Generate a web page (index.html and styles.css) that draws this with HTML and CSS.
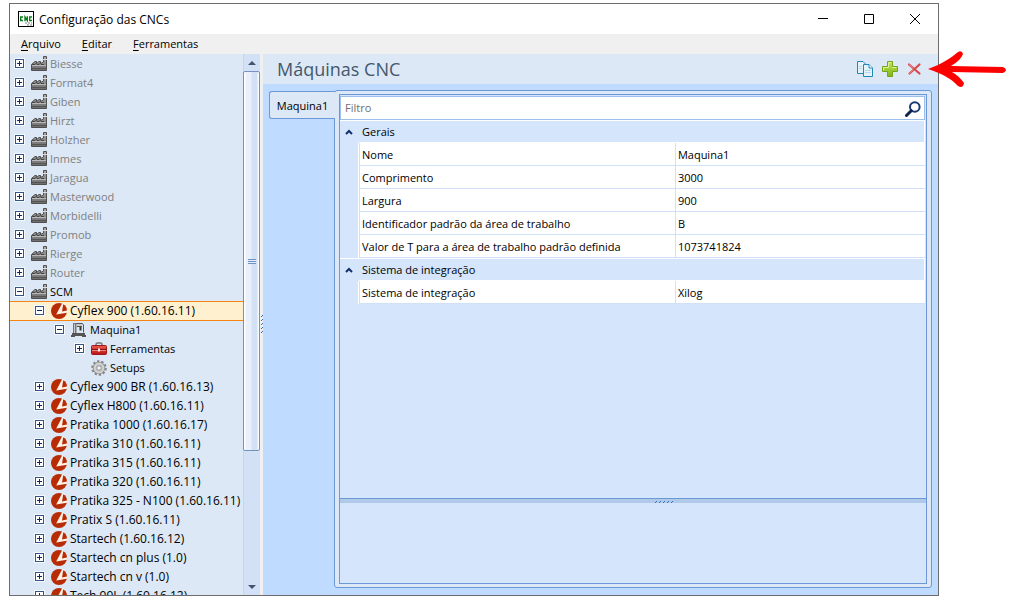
FILE: index.html
```html
<!DOCTYPE html>
<html lang="pt-BR">
<head>
<meta charset="utf-8">
<title>Configuração das CNCs</title>
<link rel="stylesheet" href="styles.css">
</head>
<body>
<svg class="defs" aria-hidden="true">
  <defs>
    <linearGradient id="steel" x1="0" y1="0" x2="0" y2="1"><stop offset="0" stop-color="#b0b0b0"/><stop offset="1" stop-color="#6a6a6a"/></linearGradient>
    <linearGradient id="red" x1="0" y1="0" x2="0" y2="1"><stop offset="0" stop-color="#ec5a50"/><stop offset="1" stop-color="#b81414"/></linearGradient>
    <linearGradient id="green" x1="0" y1="0" x2="0" y2="1"><stop offset="0" stop-color="#c3e64f"/><stop offset="1" stop-color="#7fb51a"/></linearGradient>
    <symbol id="factory" viewBox="0 0 16 16">
      <path d="M.5 14.500V8.500L4 5.500H5.500V7.500L8 5.500H9.500V7.500L12.500 6V.500H15.500V14.500Z" fill="url(#steel)" stroke="#505050"/>
      <path d="M1 8.500H4L5.500 7M6 8.500H8L9.500 7M10 8.500H13" stroke="#444" fill="none"/>
      <path d="M1 9.500H15" stroke="#b9b9b9" fill="none"/>
      <path d="M1 12.500H15" stroke="#555" fill="none"/>
      <path d="M12 3.500H16" stroke="#ddd" fill="none"/>
    </symbol>
    <symbol id="scm" viewBox="0 0 16 16">
      <circle cx="8" cy="8" r="8" fill="#b82c05"/>
      <path d="M11.300 0 5.200 11.500 16 9.800V7.500L12.500 0Z" fill="#fff1e6"/>
      <path d="M12.200 1.200Q15.400 3 15.900 7.500L11 8.400Z" fill="#b82c05"/>
    </symbol>
    <symbol id="machine" viewBox="0 0 16 16">
      <path d="M2.500 1.500H11.500L12.500 3V10.500" fill="none" stroke="#555"/>
      <path d="M2 1H5.500V11H2Z" fill="#777"/><path d="M3.500 2V11" stroke="#c8c8c8"/>
      <path d="M6 2H11V4H6Z" fill="#c9c9c9"/>
      <path d="M6 4.500H11" stroke="#555"/>
      <path d="M9.500 5V8.500" stroke="#333" stroke-width="2"/>
      <path d="M1 11H14V13H15V15H11V14H4V15H0V13H1Z" fill="#555"/>
    </symbol>
    <symbol id="toolbox" viewBox="0 0 16 16">
      <path d="M5 5V3.500Q5 2 6.500 2H9.500Q11 2 11 3.500V5" fill="none" stroke="#777" stroke-width="1.500"/>
      <rect x=".5" y="4.500" width="15" height="9" rx="1" fill="url(#red)" stroke="#a01818"/>
      <path d="M1 8.500H15" stroke="#811010"/><path d="M1 9.500H15" stroke="#f28a80"/>
      <rect x="7" y="7.500" width="2" height="3" fill="#eee"/>
    </symbol>
    <symbol id="gear" viewBox="0 0 16 16">
      <circle cx="8" cy="8" r="6.700" fill="none" stroke="#858585" stroke-width="2.200" stroke-dasharray="2.300 1.909"/>
      <circle cx="8" cy="8" r="4.500" fill="none" stroke="#929292" stroke-width="3.500"/>
      <circle cx="8" cy="8" r="4.300" fill="none" stroke="#d3d3d3" stroke-width="2.200"/>
      <circle cx="8" cy="8" r="2.200" fill="#f2f2f2" stroke="#858585" stroke-width=".8"/>
    </symbol>
    <symbol id="plus" viewBox="0 0 11 11">
      <rect width="11" height="11" fill="#f6faff"/>
      <rect x="1.500" y="1.500" width="8" height="8" fill="#fff" stroke="#33557f"/>
      <path d="M3 5.500H8M5.500 3V8" stroke="#102a60"/>
    </symbol>
    <symbol id="minus" viewBox="0 0 11 11">
      <rect width="11" height="11" fill="#f6faff"/>
      <rect x="1.500" y="1.500" width="8" height="8" fill="#fff" stroke="#33557f"/>
      <path d="M3 5.500H8" stroke="#102a60"/>
    </symbol>
    <symbol id="chevron" viewBox="0 0 8 6"><path d="M1 5 4 2 7 5" fill="none" stroke="#14306c" stroke-width="2"/></symbol>
  </defs>
</svg>

<main class="window">
  <header class="titlebar">
    <svg class="app-icon" viewBox="0 0 16 16" aria-hidden="true">
      <rect x=".5" y=".5" width="15" height="15" fill="#fff" stroke="#000"/>
      <path d="M5 6H2.700V9.500H5M7 10.200V6L9.300 9.500V5.300M14 6H11.700V9.500H14" fill="none" stroke="#0c7d1c" stroke-width="1.400"/>
      <path d="M7 12H14M9 14H14" stroke="#aaa" stroke-width="1.500" stroke-dasharray="2 1"/>
    </svg>
    <h1 class="title">Configuração das CNCs</h1>
    <div class="caption-buttons">
      <button class="caption" type="button" aria-label="Minimizar"><svg viewBox="0 0 12 12"><path d="M1 5.500H11"/></svg></button>
      <button class="caption" type="button" aria-label="Maximizar"><svg viewBox="0 0 12 12"><path d="M1.500 1.500H10.500V10.500H1.500Z"/></svg></button>
      <button class="caption" type="button" aria-label="Fechar"><svg viewBox="0 0 12 12"><path d="M1 1 11 11M11 1 1 11"/></svg></button>
    </div>
  </header>
  <nav class="menubar">
    <button class="menu" type="button"><u>A</u>rquivo</button>
    <button class="menu" type="button"><u>E</u>ditar</button>
    <button class="menu" type="button"><u>F</u>erramentas</button>
  </nav>
  <div class="workspace">
    <aside class="sidebar">
      <ul class="tree">
        <li><div class="node muted"><button class="toggle" type="button" aria-label="Expandir Biesse"><svg><use href="#plus"/></svg></button><svg class="icon"><use href="#factory"/></svg><span>Biesse</span></div></li>
        <li><div class="node muted"><button class="toggle" type="button" aria-label="Expandir Format4"><svg><use href="#plus"/></svg></button><svg class="icon"><use href="#factory"/></svg><span>Format4</span></div></li>
        <li><div class="node muted"><button class="toggle" type="button" aria-label="Expandir Giben"><svg><use href="#plus"/></svg></button><svg class="icon"><use href="#factory"/></svg><span>Giben</span></div></li>
        <li><div class="node muted"><button class="toggle" type="button" aria-label="Expandir Hirzt"><svg><use href="#plus"/></svg></button><svg class="icon"><use href="#factory"/></svg><span>Hirzt</span></div></li>
        <li><div class="node muted"><button class="toggle" type="button" aria-label="Expandir Holzher"><svg><use href="#plus"/></svg></button><svg class="icon"><use href="#factory"/></svg><span>Holzher</span></div></li>
        <li><div class="node muted"><button class="toggle" type="button" aria-label="Expandir Inmes"><svg><use href="#plus"/></svg></button><svg class="icon"><use href="#factory"/></svg><span>Inmes</span></div></li>
        <li><div class="node muted"><button class="toggle" type="button" aria-label="Expandir Jaragua"><svg><use href="#plus"/></svg></button><svg class="icon"><use href="#factory"/></svg><span>Jaragua</span></div></li>
        <li><div class="node muted"><button class="toggle" type="button" aria-label="Expandir Masterwood"><svg><use href="#plus"/></svg></button><svg class="icon"><use href="#factory"/></svg><span>Masterwood</span></div></li>
        <li><div class="node muted"><button class="toggle" type="button" aria-label="Expandir Morbidelli"><svg><use href="#plus"/></svg></button><svg class="icon"><use href="#factory"/></svg><span>Morbidelli</span></div></li>
        <li><div class="node muted"><button class="toggle" type="button" aria-label="Expandir Promob"><svg><use href="#plus"/></svg></button><svg class="icon"><use href="#factory"/></svg><span>Promob</span></div></li>
        <li><div class="node muted"><button class="toggle" type="button" aria-label="Expandir Rierge"><svg><use href="#plus"/></svg></button><svg class="icon"><use href="#factory"/></svg><span>Rierge</span></div></li>
        <li><div class="node muted"><button class="toggle" type="button" aria-label="Expandir Router"><svg><use href="#plus"/></svg></button><svg class="icon"><use href="#factory"/></svg><span>Router</span></div></li>
        <li><div class="node"><button class="toggle" type="button" aria-label="Recolher SCM"><svg><use href="#minus"/></svg></button><svg class="icon"><use href="#factory"/></svg><span>SCM</span></div>
          <ul class="branch level-1">
            <li><div class="node model selected"><button class="toggle" type="button" aria-label="Recolher Cyflex 900"><svg><use href="#minus"/></svg></button><svg class="icon"><use href="#scm"/></svg><span>Cyflex 900 (1.60.16.11)</span></div>
              <ul class="branch level-2">
                <li><div class="node"><button class="toggle" type="button" aria-label="Recolher Maquina1"><svg><use href="#minus"/></svg></button><svg class="icon"><use href="#machine"/></svg><span>Maquina1</span></div>
                  <ul class="branch level-3">
                    <li><div class="node"><button class="toggle" type="button" aria-label="Expandir Ferramentas"><svg><use href="#plus"/></svg></button><svg class="icon"><use href="#toolbox"/></svg><span>Ferramentas</span></div></li>
                    <li><div class="node"><span class="toggle"></span><svg class="icon"><use href="#gear"/></svg><span>Setups</span></div></li>
                  </ul>
                </li>
              </ul>
            </li>
            <li><div class="node model"><button class="toggle" type="button" aria-label="Expandir Cyflex 900 BR"><svg><use href="#plus"/></svg></button><svg class="icon"><use href="#scm"/></svg><span>Cyflex 900 BR (1.60.16.13)</span></div></li>
            <li><div class="node model"><button class="toggle" type="button" aria-label="Expandir Cyflex H800"><svg><use href="#plus"/></svg></button><svg class="icon"><use href="#scm"/></svg><span>Cyflex H800 (1.60.16.11)</span></div></li>
            <li><div class="node model"><button class="toggle" type="button" aria-label="Expandir Pratika 1000"><svg><use href="#plus"/></svg></button><svg class="icon"><use href="#scm"/></svg><span>Pratika 1000 (1.60.16.17)</span></div></li>
            <li><div class="node model"><button class="toggle" type="button" aria-label="Expandir Pratika 310"><svg><use href="#plus"/></svg></button><svg class="icon"><use href="#scm"/></svg><span>Pratika 310 (1.60.16.11)</span></div></li>
            <li><div class="node model"><button class="toggle" type="button" aria-label="Expandir Pratika 315"><svg><use href="#plus"/></svg></button><svg class="icon"><use href="#scm"/></svg><span>Pratika 315 (1.60.16.11)</span></div></li>
            <li><div class="node model"><button class="toggle" type="button" aria-label="Expandir Pratika 320"><svg><use href="#plus"/></svg></button><svg class="icon"><use href="#scm"/></svg><span>Pratika 320 (1.60.16.11)</span></div></li>
            <li><div class="node model"><button class="toggle" type="button" aria-label="Expandir Pratika 325 - N100"><svg><use href="#plus"/></svg></button><svg class="icon"><use href="#scm"/></svg><span>Pratika 325 - N100 (1.60.16.11)</span></div></li>
            <li><div class="node model"><button class="toggle" type="button" aria-label="Expandir Pratix S"><svg><use href="#plus"/></svg></button><svg class="icon"><use href="#scm"/></svg><span>Pratix S (1.60.16.11)</span></div></li>
            <li><div class="node model"><button class="toggle" type="button" aria-label="Expandir Startech"><svg><use href="#plus"/></svg></button><svg class="icon"><use href="#scm"/></svg><span>Startech (1.60.16.12)</span></div></li>
            <li><div class="node model"><button class="toggle" type="button" aria-label="Expandir Startech cn plus"><svg><use href="#plus"/></svg></button><svg class="icon"><use href="#scm"/></svg><span>Startech cn plus (1.0)</span></div></li>
            <li><div class="node model"><button class="toggle" type="button" aria-label="Expandir Startech cn v"><svg><use href="#plus"/></svg></button><svg class="icon"><use href="#scm"/></svg><span>Startech cn v (1.0)</span></div></li>
            <li><div class="node model"><button class="toggle" type="button" aria-label="Expandir Tech 99L"><svg><use href="#plus"/></svg></button><svg class="icon"><use href="#scm"/></svg><span>Tech 99L (1.60.16.12)</span></div></li>
          </ul>
        </li>
      </ul>
      <div class="scrollbar">
        <button class="scroll-button" type="button" aria-label="Rolar para cima"><svg viewBox="0 0 8 4"><path d="M0 4 4 0 8 4Z"/></svg></button>
        <div class="track"><div class="thumb"><span class="grip"></span></div></div>
        <button class="scroll-button" type="button" aria-label="Rolar para baixo"><svg viewBox="0 0 8 4"><path d="M0 0H8L4 4Z"/></svg></button>
      </div>
    </aside>
    <div class="splitter"><svg class="dots" viewBox="0 0 3 20"><path d="M1 2 3 0M1 6 3 4M1 10 3 8M1 14 3 12M1 18 3 16"/></svg></div>
    <section class="content">
      <header class="heading">
        <h2 class="heading-text">Máquinas CNC</h2>
        <div class="actions">
          <button class="action" type="button" aria-label="Copiar">
            <svg viewBox="0 0 16 16"><g fill="#e3f3fb" stroke="#2387b5"><path d="M.5.500H6L9.500 4V12.500H.5Z"/><path d="M6.500 3.500H12L15.500 7V15.500H6.500Z"/><path d="M12 3.500V7H15.500" fill="#fff"/></g><path d="M2 5.500H5M2 7.500H5M8 9.500H14M8 11.500H14" stroke="#b5d9e8"/></svg>
          </button>
          <button class="action" type="button" aria-label="Adicionar">
            <svg viewBox="0 0 16 16"><path d="M5.500.500H10.500V5.500H15.500V10.500H10.500V15.500H5.500V10.500H.5V5.500H5.500Z" fill="url(#green)" stroke="#76a51c"/><path d="M6.500 6.500V1.500H9.500M1.500 9.500V6.500H6.500M10 6.500H14.500" fill="none" stroke="#dff399"/></svg>
          </button>
          <button class="action" type="button" aria-label="Excluir">
            <svg viewBox="0 0 16 16"><path d="M2 3.500 12.500 12.500M12.500 3.500 2.500 12.500" stroke="#d9484b" stroke-width="2.200" stroke-linecap="round"/><path d="M2 3.500 6 7M2.500 12.500 6 9.200" stroke="#ee8585" stroke-linecap="round"/></svg>
          </button>
        </div>
      </header>
      <div class="tab-area">
        <div class="tabs" role="tablist"><button class="tab" type="button" role="tab" aria-selected="true">Maquina1</button></div>
        <div class="panel">
          <div class="editor">
            <div class="filter">
              <input class="filter-input" type="text" placeholder="Filtro" aria-label="Filtro">
              <button class="search" type="button" aria-label="Pesquisar"><svg viewBox="0 0 16 16"><circle cx="9.800" cy="6" r="4.800" fill="#fff" stroke="#183a70" stroke-width="2"/><path d="M6.200 9.700 1.500 14.500" stroke="#0e2450" stroke-width="3" stroke-linecap="round"/></svg></button>
            </div>
            <table class="properties">
              <colgroup><col class="gutter-col"><col class="name-col"><col></colgroup>
              <tbody>
                <tr class="group"><td><button class="collapse" type="button" aria-label="Recolher Gerais"><svg><use href="#chevron"/></svg></button></td><th colspan="2" scope="rowgroup">Gerais</th></tr>
                <tr><td class="gutter"></td><th scope="row">Nome</th><td>Maquina1</td></tr>
                <tr><td class="gutter"></td><th scope="row">Comprimento</th><td>3000</td></tr>
                <tr><td class="gutter"></td><th scope="row">Largura</th><td>900</td></tr>
                <tr><td class="gutter"></td><th scope="row">Identificador padrão da área de trabalho</th><td>B</td></tr>
                <tr><td class="gutter"></td><th scope="row">Valor de T para a área de trabalho padrão definida</th><td>1073741824</td></tr>
              </tbody>
              <tbody>
                <tr class="group"><td><button class="collapse" type="button" aria-label="Recolher Sistema de integração"><svg><use href="#chevron"/></svg></button></td><th colspan="2" scope="rowgroup">Sistema de integração</th></tr>
                <tr><td class="gutter"></td><th scope="row">Sistema de integração</th><td>Xilog</td></tr>
              </tbody>
            </table>
            <div class="divider"><svg class="divider-dots" viewBox="0 0 20 3"><path d="M0 3 2 1M4 3 6 1M8 3 10 1M12 3 14 1M16 3 18 1"/></svg></div>
            <div class="description"></div>
          </div>
        </div>
      </div>
    </section>
  </div>
</main>
<svg class="pointer" viewBox="0 0 79 38" role="img" aria-label="Seta apontando para Excluir"><path d="M0 18C12 14 23 7 30 1Q34-1 35 3Q33 9 23 15L75 16Q81 19 75 22L24 21Q31 25 36 32Q35 38 30 35C23 27 12 22 0 18Z" fill="#fe0000"/></svg>
</body>
</html>
```
FILE: styles.css
```css
* { box-sizing: border-box; }

body {
  margin: 0;
  height: 100vh;
  padding: 3px 73px 3px 9px;
  background: #fff;
  color: #000;
  font: 11px/19px "Open Sans", "Noto Sans", sans-serif;
}

button {
  margin: 0;
  padding: 0;
  border: 0;
  background: none;
  color: inherit;
  font: inherit;
}

ul { margin: 0; padding: 0; list-style: none; }
svg { display: block; }
.defs { position: absolute; width: 0; height: 0; }

.window {
  display: flex;
  flex-direction: column;
  height: 100%;
  border: 1px solid #6d6d70;
}

.titlebar {
  display: flex;
  flex: none;
  align-items: center;
  gap: 5px;
  height: 30px;
  padding-left: 8px;
}
.app-icon { width: 16px; height: 16px; }
.title { flex: 1; margin: 0; font-size: 12px; font-weight: 400; }
.caption-buttons { display: flex; }
.caption { display: grid; place-items: center; width: 46px; height: 30px; }
.caption svg { width: 12px; height: 12px; fill: none; stroke: #000; }

.menubar {
  display: flex;
  flex: none;
  align-items: flex-start;
  gap: 21px;
  height: 20px;
  padding-left: 11px;
  background: #f0f0f0;
}
.menu u { text-underline-offset: 2px; }

.workspace { display: flex; flex: 1; min-height: 0; }

.sidebar { display: flex; flex: none; width: 250px; background: #dce8f6; }
.tree { flex: 1; min-width: 0; overflow: hidden; }
.node {
  display: flex;
  align-items: center;
  height: 19px;
  padding-left: 4px;
  white-space: nowrap;
}
.level-1 .node { padding-left: 24px; }
.level-2 .node { padding-left: 44px; }
.level-3 .node { padding-left: 64px; }
.model { font-size: 12px; }
.muted { color: #808080; }
.selected {
  background: #fff0cf;
  box-shadow: inset 0 1px #f58412, 0 1px #f58412;
}
.toggle { width: 11px; height: 11px; margin-right: 6px; }
.toggle svg { width: 11px; height: 11px; }
.icon { width: 16px; height: 16px; margin-right: 3px; }

.scrollbar {
  display: flex;
  flex: none;
  flex-direction: column;
  width: 17px;
  border-left: 1px solid #c5d5ec;
  background: #d2e1f6;
}
.scroll-button { display: grid; place-items: center; height: 17px; }
.scroll-button svg { width: 8px; height: 4px; fill: #44546f; }
.track { flex: 1; }
.thumb {
  display: grid;
  place-items: center;
  height: 75%;
  margin-left: -1px;
  border: 1px solid #7591bd;
  border-radius: 2px;
  background: linear-gradient(90deg, #fff 1px, #e9f0fc 2px 7px, #d3e1f5 8px 13px, #f7faff 14px);
}
.grip {
  width: 8px;
  height: 5px;
  background: repeating-linear-gradient(#6f93c8 0 1px, #e4edf9 1px 2px);
}

.splitter { display: grid; flex: none; align-items: center; width: 3px; background: #f0f0f0; }
.dots { width: 3px; height: 20px; stroke: #2f6fc0; }

.content { display: flex; flex: 1; flex-direction: column; min-width: 0; background: #bfdbff; }
.heading {
  display: flex;
  flex: none;
  align-items: center;
  justify-content: space-between;
  height: 30px;
  padding: 0 15px 0 14px;
  background: #dce8f6;
}
.heading-text { margin: 0; color: #43586c; font-size: 18px; font-weight: 400; }
.actions { display: flex; gap: 9px; }
.action, .action svg { width: 16px; height: 16px; }

.tab-area { display: flex; flex: 1; min-height: 0; padding: 6px 6px 7px; }
.tabs { z-index: 1; flex: none; margin: 1px -1px 0 0; }
.tab {
  display: block;
  width: 66px;
  height: 28px;
  border: 1px solid #6d98d8;
  border-right: 0;
  border-radius: 3px 0 0 3px;
  background: #dce8f6;
}
.panel {
  display: flex;
  flex: 1;
  min-width: 0;
  padding: 3px 4px;
  border: 1px solid #6d98d8;
  border-radius: 3px;
  background: #dce8f6;
}
.editor {
  display: flex;
  flex: 1;
  flex-direction: column;
  min-width: 0;
  border: 1px solid #6d98d8;
  background: #d4e5fc;
}

.filter {
  display: flex;
  flex: none;
  align-items: center;
  height: 24px;
  margin: 1px 1px 0 0;
  padding: 0 3px 2px 0;
  border: 1px solid #9dbfec;
  background: #fff;
}
.filter-input {
  flex: 1;
  min-width: 0;
  padding: 0 4px;
  border: 0;
  outline: 0;
  background: none;
  color: #000;
  font: inherit;
}
.filter-input::placeholder { color: #707070; opacity: 1; }
.search, .search svg { width: 16px; height: 16px; }
.search { align-self: flex-end; }

.properties {
  width: calc(100% - 1px);
  table-layout: fixed;
  border-spacing: 0;
}
.gutter-col { width: 19px; }
.name-col { width: 54%; }
.properties th,
.properties td {
  height: 23px;
  padding: 0 2px;
  border-bottom: 1px solid #cfe0f7;
  background: #fff;
  font-weight: 400;
  text-align: left;
}
.properties th,
.properties th + td { border-left: 1px solid #cfe0f7; }
.properties .group td,
.properties .group th {
  border-top: 1px solid #fff;
  border-bottom-color: #fff;
  border-left: 0;
  background: #d4e5fc;
}
.properties .group th { padding-left: 3px; border-right: 1px solid #fff; }
.properties .group td { border-bottom-color: #d4e5fc; }
.properties .gutter { border-right: 1px solid #fff; border-bottom: 0; background: #d4e5fc; }
.collapse { display: block; padding: 0 3px; }
.collapse svg { width: 8px; height: 6px; }

.divider {
  display: grid;
  place-items: center;
  height: 5px;
  margin-top: auto;
  padding-left: 64px;
  border-top: 1px solid #6d98d8;
  background: #b0c9e9;
}
.divider-dots { width: 20px; height: 3px; stroke: #2f6fc0; }
.description { flex: 0 0 80px; }

.pointer { position: absolute; top: 51px; right: 5px; width: 79px; height: 38px; }
```
